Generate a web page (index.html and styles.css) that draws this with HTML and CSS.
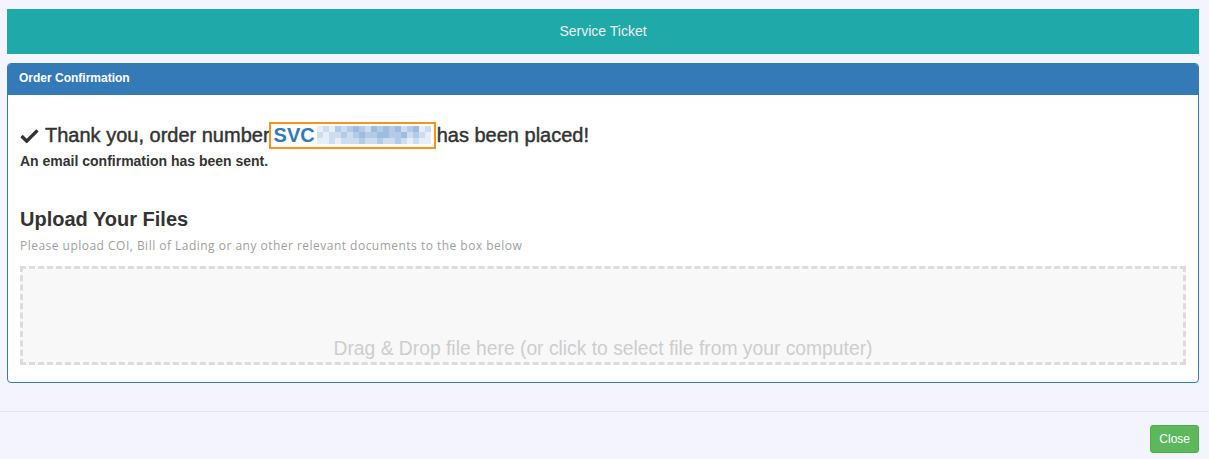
FILE: index.html
```html
<!DOCTYPE html>
<html lang="en">
<head>
  <meta charset="UTF-8">
  <meta name="viewport" content="width=device-width, initial-scale=1.0">
  <title>Service Ticket</title>
  <link rel="stylesheet" href="styles.css">
</head>
<body>
  <div class="modal-title">Service Ticket</div>

  <div class="panel">
    <div class="panel-heading">Order Confirmation</div>
    <div class="panel-body">
      <h4 class="thanks">
        <svg class="check" viewBox="0 0 20 16" width="19" height="15">
          <path d="M1.5 8.5 L7 14 L18.5 2.5" fill="none" stroke="#333" stroke-width="3.6"/>
        </svg>
        <span>Thank you, order number</span><span class="order-no"><span class="svc">SVC</span><span class="blur">
          <i class="c1"></i><i class="c2"></i><i class="c1"></i><i class="c3"></i><i class="c2"></i><i class="c3"></i><i class="c4"></i><i class="c3"></i><i class="c2"></i><i class="c4"></i><i class="c3"></i><i class="c4"></i><i class="c3"></i><i class="c4"></i><i class="c2"></i><i class="c3"></i><i class="c4"></i><i class="c1"></i><i class="c2"></i>
          <i class="c2"></i><i class="c1"></i><i class="c2"></i><i class="c2"></i><i class="c3"></i><i class="c2"></i><i class="c3"></i><i class="c4"></i><i class="c3"></i><i class="c3"></i><i class="c4"></i><i class="c4"></i><i class="c3"></i><i class="c3"></i><i class="c4"></i><i class="c2"></i><i class="c3"></i><i class="c2"></i><i class="c1"></i>
          <i class="c1"></i><i class="c1"></i><i class="c2"></i><i class="c1"></i><i class="c2"></i><i class="c2"></i><i class="c2"></i><i class="c3"></i><i class="c2"></i><i class="c2"></i><i class="c3"></i><i class="c2"></i><i class="c2"></i><i class="c3"></i><i class="c2"></i><i class="c1"></i><i class="c2"></i><i class="c1"></i><i class="c1"></i>
        </span></span><span>has been placed!</span>
      </h4>
      <p class="sent">An email confirmation has been sent.</p>

      <h3 class="upload-title">Upload Your Files</h3>
      <p class="upload-hint">Please upload COI, Bill of Lading or any other relevant documents to the box below</p>
      <div class="dropzone">
        <span>Drag &amp; Drop file here (or click to select file from your computer)</span>
      </div>
    </div>
  </div>

  <div class="modal-footer">
    <button class="btn-close">Close</button>
  </div>
</body>
</html>
```

FILE: styles.css
```css
body {
  margin: 0;
  background: #f3f4fd;
  font-family: "Liberation Sans", Arial, sans-serif;
  color: #333;
}

.modal-title {
  margin: 9px 10px 0 7px;
  height: 45px;
  line-height: 45px;
  background: #1fa9a9;
  color: #eee;
  font-size: 14px;
  text-align: center;
}

.panel {
  margin: 9px 10px 0 7px;
  border: 1px solid #337ab7;
  border-radius: 4px;
  background: #fff;
  overflow: hidden;
}

.panel-heading {
  background: #337ab7;
  color: #fff;
  font-size: 12px;
  font-weight: bold;
  height: 32px;
  line-height: 31px;
  padding: 0 12px;
  margin: -1px -1px 0 -1px;
}

.panel-body {
  padding: 26px 12px 17px 12px;
}

.thanks {
  margin: 0;
  font-size: 20px;
  font-weight: normal;
  -webkit-text-stroke: 0.45px #333;
  line-height: 28px;
  display: flex;
  align-items: center;
}

.check {
  margin-right: 6px;
}

.order-no {
  display: inline-flex;
  align-items: center;
  height: 23px;
  border: 2px solid #f7941d;
  padding: 0 3px 0 3px;
  margin: 0 1px 0 -1px;
  -webkit-text-stroke: 0;
  font-weight: bold;
}

.svc {
  color: #337ab7;
}

.blur {
  display: inline-grid;
  grid-template-columns: repeat(19, 6px);
  grid-auto-rows: 6px;
  margin-left: 2px;
}

.blur i { display: block; }
.blur .c1 { background: #e6eef8; }
.blur .c2 { background: #cddcef; }
.blur .c3 { background: #b2cbe6; }
.blur .c4 { background: #9dbcde; }

.sent {
  margin: 4px 0 0 0;
  font-size: 14px;
  font-weight: bold;
}

.upload-title {
  margin: 37px 0 0 0;
  font-size: 20px;
  font-weight: bold;
  line-height: 26px;
}

.upload-hint {
  margin: 5px 0 0 0;
  font-family: "Open Sans", sans-serif;
  font-size: 12px;
  letter-spacing: 0.48px;
  color: #a0a0a0;
}

.dropzone {
  margin-top: 12px;
  height: 93px;
  border: 3px dashed #dcdcdc;
  background: #f8f8f8;
  display: flex;
  justify-content: center;
  align-items: flex-end;
}

.dropzone span {
  color: #cdcdcd;
  font-size: 19.3px;
  line-height: 26px;
}

.modal-footer {
  margin-top: 28px;
  border-top: 1px solid #e5e5e5;
  padding: 13px 10px 0 0;
  display: flex;
  justify-content: flex-end;
}

.btn-close {
  background: #5cb85c;
  border: 1px solid #4cae4c;
  border-radius: 3px;
  color: #fff;
  font-family: "Liberation Sans", Arial, sans-serif;
  font-size: 12px;
  height: 28px;
  padding: 0 8px;
}
```
